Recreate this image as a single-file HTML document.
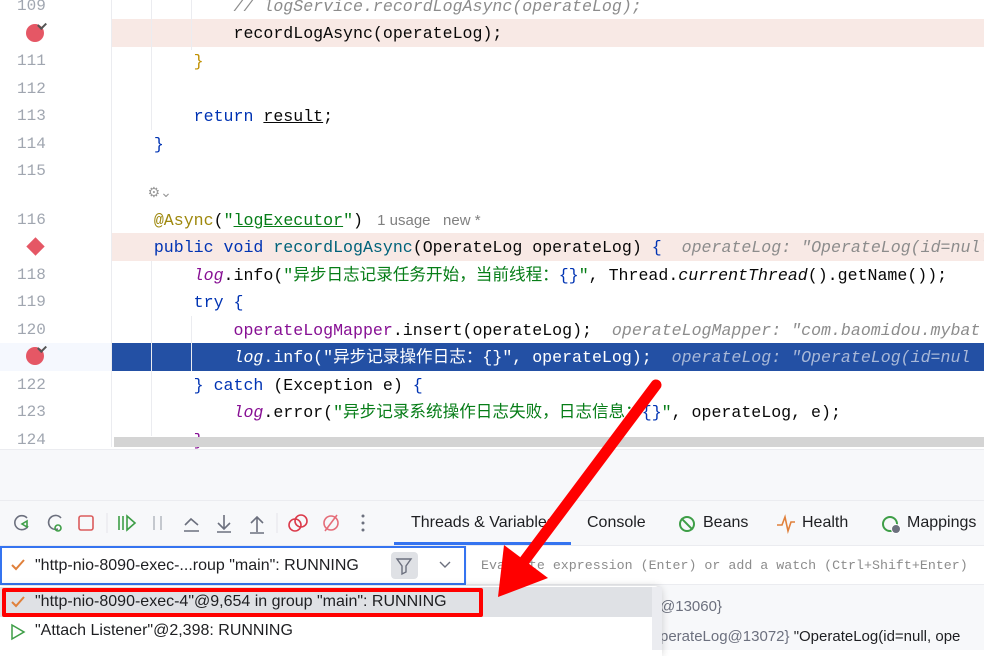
<!DOCTYPE html>
<html><head><meta charset="utf-8"><style>
*{margin:0;padding:0;box-sizing:border-box}
body{width:984px;height:650px;overflow:hidden;background:#fff;position:relative;font-family:"Liberation Sans","Noto Sans CJK SC",sans-serif}
.ln{position:absolute;left:0;width:111px;height:28px;line-height:28px;font:16px "Liberation Mono",monospace;color:#a0a6b0;padding-left:17px;margin-top:5px}
.code{position:absolute;left:114px;right:0;height:28px;line-height:28px;font:16.6px "Liberation Mono","Noto Sans CJK SC",monospace;color:#080808;white-space:pre;margin-top:5px}
.cj{margin-top:0}
.kw{color:#0033b3}.str{color:#067d17}.cm{color:#8c8c8c;font-style:italic}.fld{color:#871094}.it{font-style:italic}
.hint{color:#8c8c8c;font-style:italic}
.bp{position:absolute;left:26px;width:18px;height:18px;border-radius:50%;background:#e55765}
.bp:after{content:"";position:absolute;right:-2px;top:-2px;width:6px;height:4px;border-left:2px solid #555;border-bottom:2px solid #555;transform:rotate(-45deg)}
.gut{position:absolute;left:111px;top:0;width:1px;height:447px;background:#ebecf0}
.tab{position:absolute;top:514px;font-size:16px;color:#1e1f22}
</style></head><body>
<div class="gut"></div>
<div style="position:absolute;left:112px;top:19px;right:0;height:28px;background:#f8e9e5"></div>
<div style="position:absolute;left:112px;top:233px;right:0;height:28px;background:#f8e9e5"></div>
<div style="position:absolute;left:0;top:343px;width:111px;height:28px;background:#f5f8fe"></div>
<div style="position:absolute;left:112px;top:343px;right:0;height:28px;background:#2350a4"></div>
<div style="position:absolute;left:151px;top:0;width:1px;height:130px;background:#ebecf0"></div>
<div style="position:absolute;left:191px;top:0;width:1px;height:50px;background:#ebecf0"></div>
<div style="position:absolute;left:151px;top:261px;width:1px;height:175px;background:#ebecf0"></div>
<div style="position:absolute;left:191px;top:316px;width:1px;height:55px;background:#ebecf0"></div>

<div class="ln" style="top:-8px">109</div>
<div class="bp" style="top:24px"></div>
<div class="ln" style="top:47px">111</div>
<div class="ln" style="top:75px">112</div>
<div class="ln" style="top:102px">113</div>
<div class="ln" style="top:130px">114</div>
<div class="ln" style="top:157px">115</div>
<div class="ln" style="top:206px">116</div>
<div style="position:absolute;left:29px;top:240px;width:13px;height:13px;background:#e55765;transform:rotate(45deg)"></div>
<div class="ln" style="top:261px">118</div>
<div class="ln" style="top:288px">119</div>
<div class="ln" style="top:316px">120</div>
<div class="bp" style="top:347px"></div>
<div class="ln" style="top:371px">122</div>
<div class="ln" style="top:398px">123</div>
<div class="ln" style="top:426px">124</div>

<div class="code" style="top:-8px"><span class="cm">            // logService.recordLogAsync(operateLog);</span></div>
<div class="code" style="top:19px">            recordLogAsync(operateLog);</div>
<div class="code" style="top:47px"><span style="color:#c09000">        }</span></div>
<div class="code" style="top:102px">        <span class="kw">return</span> <u>result</u>;</div>
<div class="code" style="top:130px"><span class="kw">    }</span></div>
<div class="code" style="top:180px;color:#999;font-size:14px">    ⚙⌄</div>
<div class="code" style="top:206px"><span style="color:#9e880d">    @Async</span>(<span class="str">"<u>logExecutor</u>"</span>) <span style="font-family:'Liberation Sans';font-size:15px;color:#808080"> 1 usage   new *</span></div>
<div class="code" style="top:233px"><span class="kw">    public void </span><span style="color:#00627a">recordLogAsync</span>(OperateLog operateLog) <span class="kw">{</span>  <span class="hint">operateLog: "OperateLog(id=null</span></div>
<div class="code cj" style="top:261px">        <span class="fld it">log</span>.info(<span class="str">"异步日志记录任务开始，当前线程：<span class="kw">{}</span>"</span>, Thread.<span class="it">currentThread</span>().getName());</div>
<div class="code" style="top:288px"><span class="kw">        try {</span></div>
<div class="code" style="top:316px">            <span class="fld">operateLogMapper</span>.insert(operateLog);  <span class="hint">operateLogMapper: "com.baomidou.mybat</span></div>
<div class="code cj" style="top:343px;color:#fff">            <span class="it">log</span>.info("异步记录操作日志：{}", operateLog);  <span class="hint" style="color:#a8b8d8">operateLog: "OperateLog(id=nul</span></div>
<div class="code" style="top:371px"><span class="kw">        } catch</span> (Exception e) <span class="kw">{</span></div>
<div class="code cj" style="top:398px">            <span class="fld it">log</span>.error(<span class="str">"异步记录系统操作日志失败，日志信息：<span class="kw">{}</span>"</span>, operateLog, e);</div>
<div class="code" style="top:426px"><span style="color:#871094">        }</span></div>
<div style="position:absolute;left:114px;top:437px;right:0;height:10px;background:#d4d4d4"></div>

<div style="position:absolute;left:0;top:449px;width:984px;height:201px;background:#f7f8fa;border-top:1px solid #ebecf0"></div>
<div style="position:absolute;left:0;top:500px;width:984px;height:1px;background:#ebecf0"></div>
<div style="position:absolute;left:0;top:545px;width:984px;height:1px;background:#ebecf0"></div>
<svg style="position:absolute;left:0;top:505px" width="380" height="40" viewBox="0 0 380 40">
<g fill="none" stroke-width="1.6">
<path d="M27 13a7 7 0 1 0 1 8" stroke="#6c707e"/><path d="M22 19l5 3v-6z" stroke="#3e9e47"/>
<path d="M61 13a7 7 0 1 0-3 11" stroke="#6c707e"/><circle cx="58" cy="23" r="3" stroke="#3e9e47"/>
<rect x="79" y="11" width="14" height="14" rx="2" stroke="#db5c5c"/>
<line x1="107" y1="8" x2="107" y2="28" stroke="#ebecf0"/>
<path d="M119 11v14M123 11v14M127 11l8 7-8 7z" stroke="#3e9e47"/>
<path d="M154 11v14M161 11v14" stroke="#b8bcc4"/>
<path d="M185 20l6-6 7 6M184 26h15" stroke="#6c707e"/>
<path d="M224 10v14M218 18l6 6 6-6M217 27h14" stroke="#6c707e"/>
<path d="M257 27V13M251 18l6-6 6 6M250 28h14" stroke="#6c707e"/>
<line x1="277" y1="8" x2="277" y2="28" stroke="#ebecf0"/>
<circle cx="295" cy="20" r="6" stroke="#db3b4b"/><circle cx="301" cy="16" r="6" stroke="#db3b4b"/>
<circle cx="331" cy="18" r="7" stroke="#e56c78"/><path d="M325 26l12-16" stroke="#e56c78"/>
</g><circle cx="363" cy="11" r="1.5" fill="#6c707e"/><circle cx="363" cy="18" r="1.5" fill="#6c707e"/><circle cx="363" cy="25" r="1.5" fill="#6c707e"/>
</svg>
<div class="tab" style="left:411px">Threads &amp; Variables</div>
<div style="position:absolute;left:394px;top:542px;width:177px;height:3px;background:#3574f0"></div>
<div class="tab" style="left:587px">Console</div>
<div style="position:absolute;left:679px;top:516px;width:16px;height:16px;border:2px solid #3e9e47;border-radius:50%"><div style="position:absolute;left:5px;top:-2px;width:2px;height:16px;background:#3e9e47;transform:rotate(-45deg)"></div></div>
<div class="tab" style="left:703px">Beans</div>
<svg style="position:absolute;left:776px;top:514px" width="20" height="20"><path d="M1 11h5l3-8 3 14 3-9h4" fill="none" stroke="#e0803b" stroke-width="1.6"/></svg>
<div class="tab" style="left:802px">Health</div>
<div style="position:absolute;left:882px;top:516px;width:16px;height:16px;border:2px solid #3e9e47;border-radius:50%"></div>
<div style="position:absolute;left:891px;top:524px;width:10px;height:10px;background:#6c707e;border-radius:50%;border:1px solid #fff"></div>
<div class="tab" style="left:907px">Mappings</div>

<div style="position:absolute;left:0;top:546px;width:466px;height:39px;border:2px solid #3574f0;background:#fff"></div>
<svg style="position:absolute;left:10px;top:558px" width="16" height="14"><path d="M2 7l4 4 8-9" fill="none" stroke="#e0803b" stroke-width="2"/></svg>
<div style="position:absolute;left:35px;top:557px;font-size:16px;color:#1e1f22">"http-nio-8090-exec-...roup "main": RUNNING</div>
<div style="position:absolute;left:391px;top:552px;width:27px;height:27px;background:#dfe1e5;border-radius:4px"></div>
<svg style="position:absolute;left:394px;top:556px" width="20" height="20"><path d="M3 3h14l-5 7v6l-4 2v-8z" fill="none" stroke="#6c707e" stroke-width="1.4"/></svg>
<svg style="position:absolute;left:438px;top:560px" width="14" height="10"><path d="M2 2l5 5 5-5" fill="none" stroke="#6c707e" stroke-width="1.4"/></svg>
<div style="position:absolute;left:467px;top:546px;right:0;height:39px;background:#fff;border-bottom:1px solid #ebecf0"></div>
<div style="position:absolute;left:481px;top:558px;font:13.3px 'Liberation Mono',monospace;color:#8c8c8c;white-space:nowrap">Evaluate expression (Enter) or add a watch (Ctrl+Shift+Enter)</div>
<div style="position:absolute;left:660px;top:598px;font-size:15px;color:#6c707e">@13060}</div>
<div style="position:absolute;left:660px;top:628px;font-size:15px;color:#6c707e;white-space:nowrap">perateLog@13072} <span style="color:#1e1f22">"OperateLog(id=null, ope</span></div>
<div style="position:absolute;left:0;top:586px;width:662px;height:70px;background:#fff;border-radius:0 8px 0 0;box-shadow:0 0 8px rgba(0,0,0,.18)"></div>
<div style="position:absolute;left:0;top:587px;width:652px;height:30px;background:#dfe1e5"></div>
<div style="position:absolute;left:652px;top:587px;width:10px;height:63px;background:#ebecf0"></div>
<svg style="position:absolute;left:10px;top:595px" width="16" height="14"><path d="M2 7l4 4 8-9" fill="none" stroke="#e0803b" stroke-width="2"/></svg>
<div style="position:absolute;left:35px;top:593px;font-size:16px;color:#1e1f22">"http-nio-8090-exec-4"@9,654 in group "main": RUNNING</div>
<div style="position:absolute;left:2px;top:588px;width:481px;height:29px;border:4px solid #ff0000;border-radius:2px"></div>
<svg style="position:absolute;left:10px;top:623px" width="16" height="18"><path d="M2 2l12 7-12 7z" fill="none" stroke="#3e9e47" stroke-width="1.5"/></svg>
<div style="position:absolute;left:35px;top:622px;font-size:16px;color:#1e1f22">"Attach Listener"@2,398: RUNNING</div>
<svg style="position:absolute;left:0;top:0" width="984" height="650">
<line x1="656" y1="385" x2="525" y2="560" stroke="#ff0000" stroke-width="11" stroke-linecap="round"/>
<polygon points="498,597 504,545 548,578" fill="#ff0000"/>
</svg>
</body></html>
